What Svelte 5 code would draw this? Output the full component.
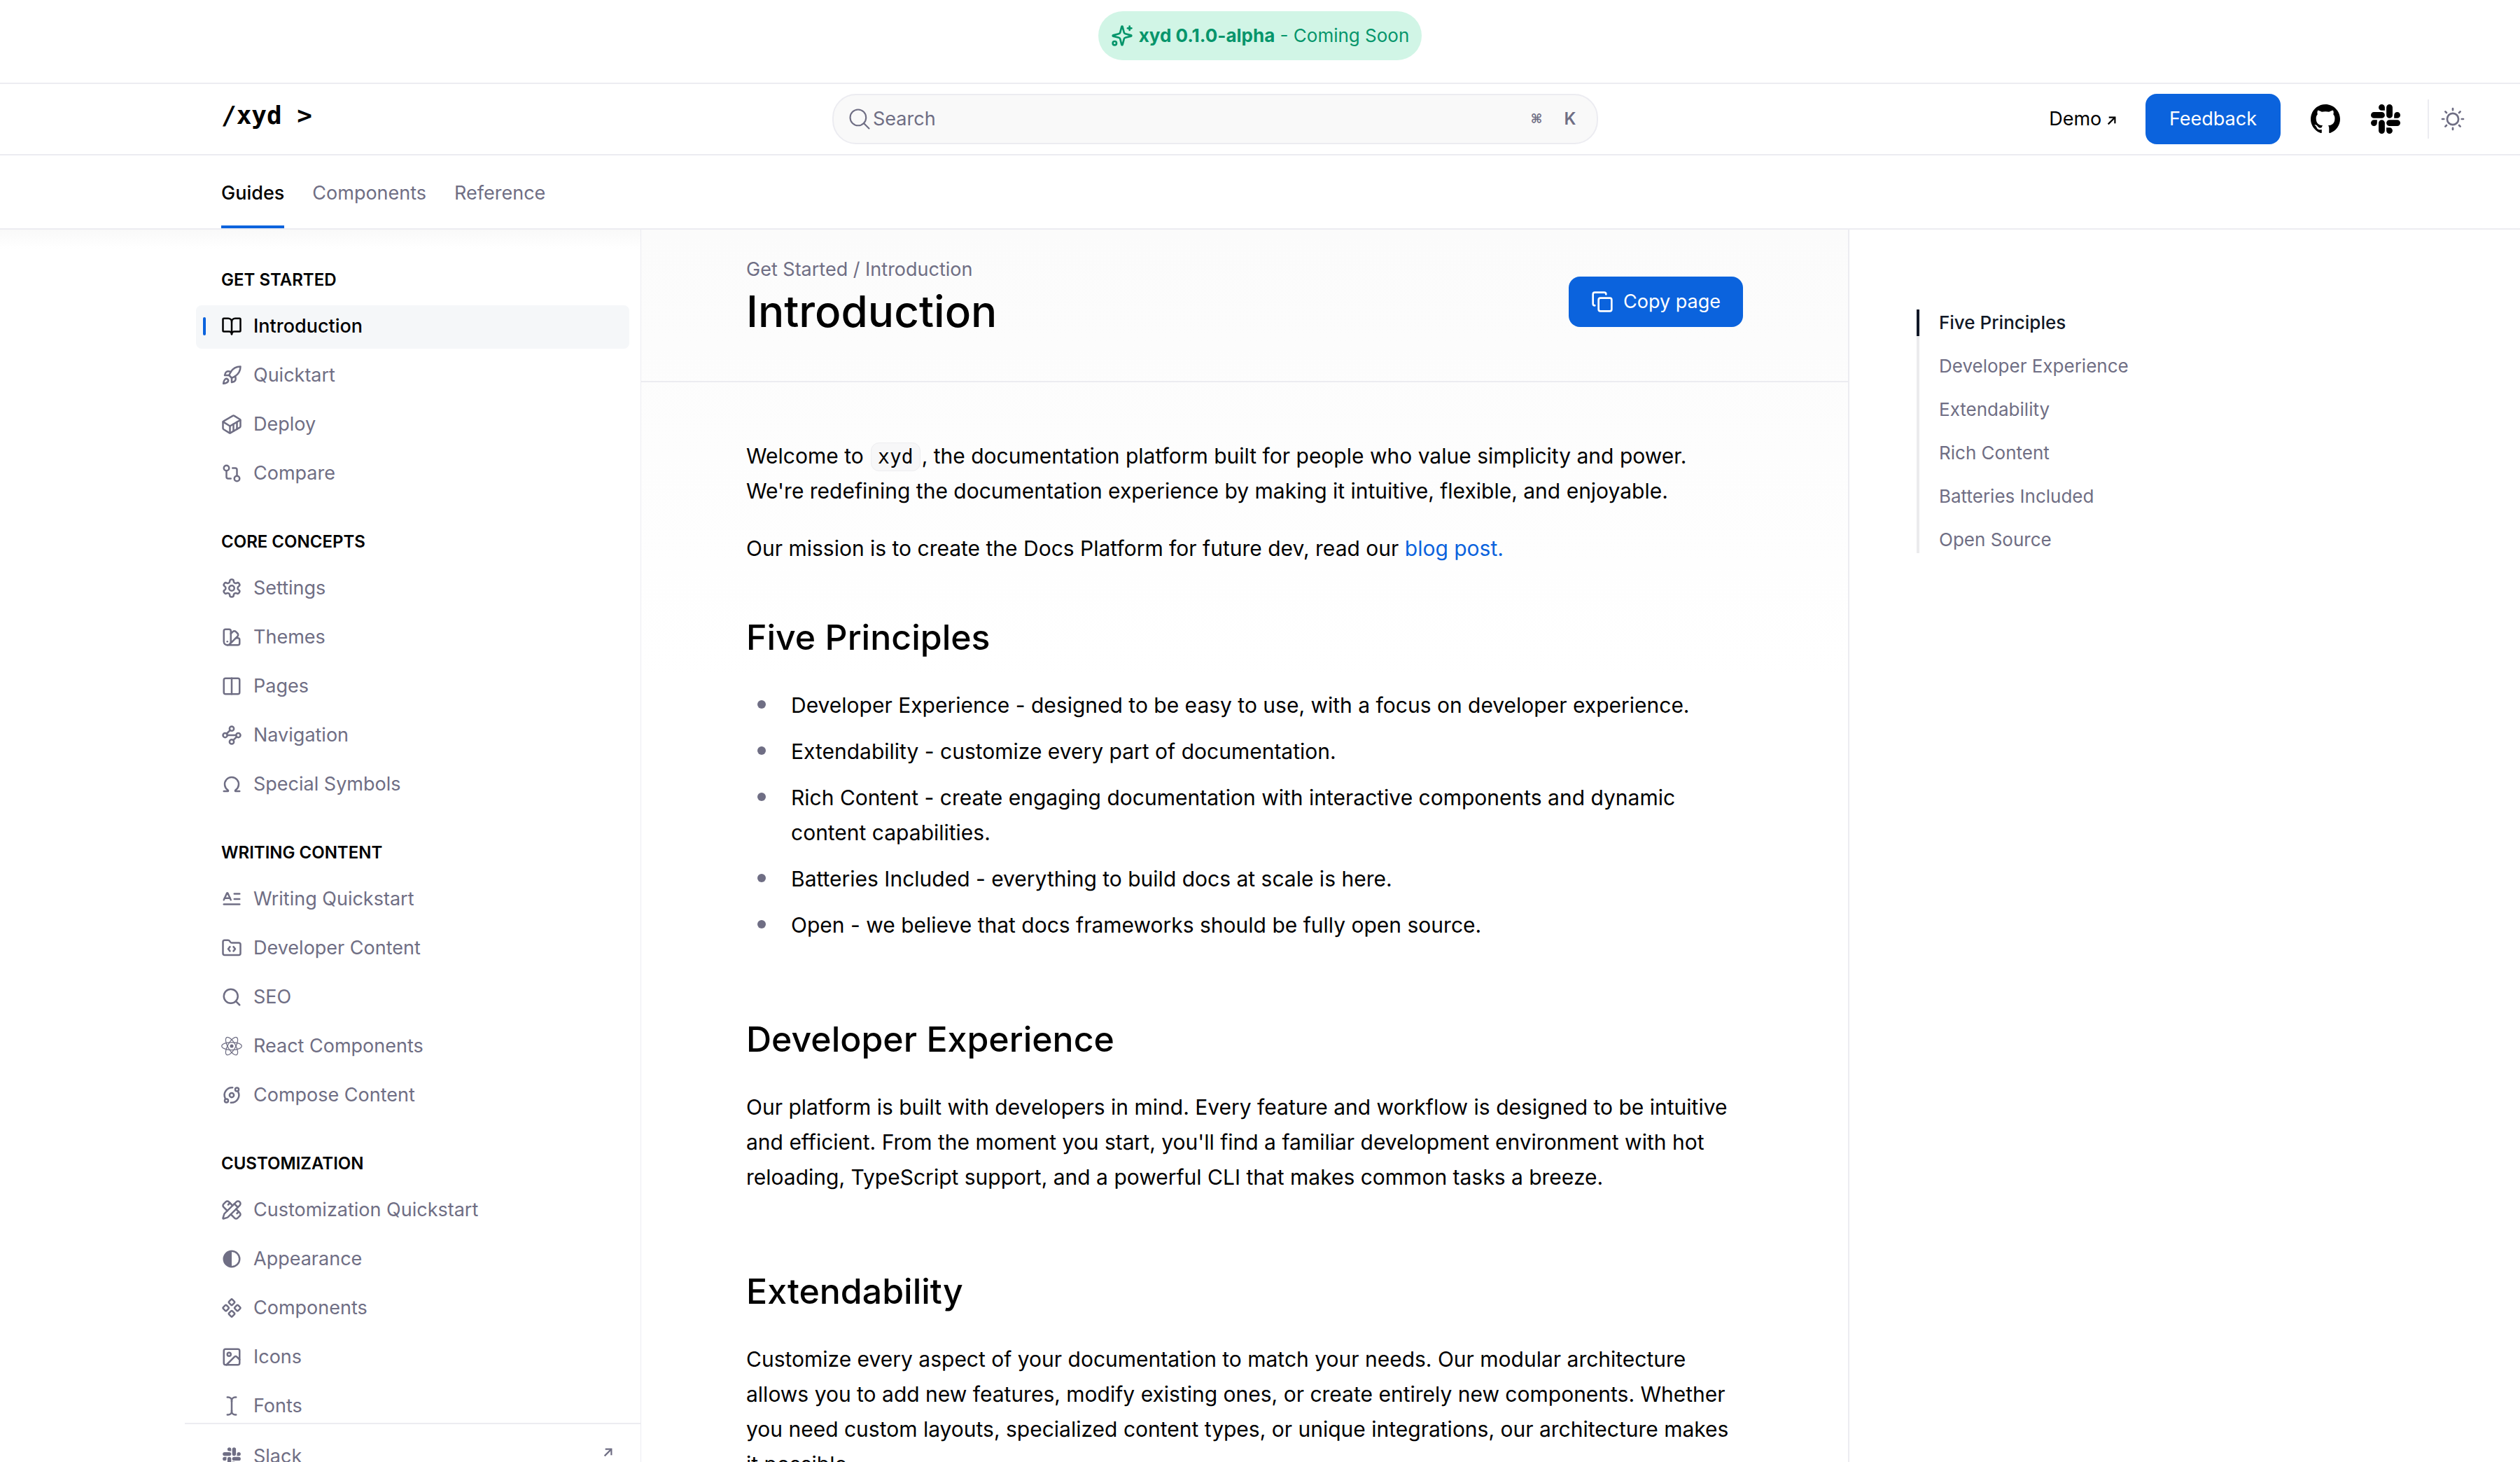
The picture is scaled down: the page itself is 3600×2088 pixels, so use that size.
<script>
  const slackPath =
    'M5.042 15.165a2.528 2.528 0 0 1-2.52 2.523A2.528 2.528 0 0 1 0 15.165a2.527 2.527 0 0 1 2.522-2.52h2.52v2.52zM6.313 15.165a2.527 2.527 0 0 1 2.521-2.52 2.527 2.527 0 0 1 2.521 2.52v6.313A2.528 2.528 0 0 1 8.834 24a2.528 2.528 0 0 1-2.521-2.522v-6.313zM8.834 5.042a2.528 2.528 0 0 1-2.521-2.52A2.528 2.528 0 0 1 8.834 0a2.528 2.528 0 0 1 2.521 2.522v2.52H8.834zM8.834 6.313a2.528 2.528 0 0 1 2.521 2.521 2.528 2.528 0 0 1-2.521 2.521H2.522A2.528 2.528 0 0 1 0 8.834a2.528 2.528 0 0 1 2.522-2.521h6.312zM18.956 8.834a2.528 2.528 0 0 1 2.522-2.521A2.528 2.528 0 0 1 24 8.834a2.528 2.528 0 0 1-2.522 2.521h-2.522V8.834zM17.688 8.834a2.528 2.528 0 0 1-2.523 2.521 2.527 2.527 0 0 1-2.52-2.521V2.522A2.527 2.527 0 0 1 15.165 0a2.528 2.528 0 0 1 2.523 2.522v6.312zM15.165 18.956a2.528 2.528 0 0 1 2.523 2.522A2.528 2.528 0 0 1 15.165 24a2.527 2.527 0 0 1-2.52-2.522v-2.522h2.52zM15.165 17.688a2.527 2.527 0 0 1-2.52-2.523 2.526 2.526 0 0 1 2.52-2.52h6.313A2.527 2.527 0 0 1 24 15.165a2.528 2.528 0 0 1-2.522 2.523h-6.313z';

  // Each icon is a list of stroked paths on a 24 unit grid.
  const dot = (x, y, r) => `M${x - r} ${y}a${r} ${r} 0 1 0 ${2 * r} 0a${r} ${r} 0 1 0 ${-2 * r} 0`;
  const square = 'M5 3h14a2 2 0 0 1 2 2v14a2 2 0 0 1-2 2H5a2 2 0 0 1-2-2V5a2 2 0 0 1 2-2z';

  const icons = {
    book: ['M12 7v14', 'M3 18a1 1 0 0 1-1-1V4a1 1 0 0 1 1-1h5a4 4 0 0 1 4 4 4 4 0 0 1 4-4h5a1 1 0 0 1 1 1v13a1 1 0 0 1-1 1h-6a3 3 0 0 0-3 3 3 3 0 0 0-3-3z'],
    rocket: [
      'M4.5 16.5c-1.5 1.26-2 5-2 5s3.74-.5 5-2c.71-.84.7-2.13-.09-2.91a2.18 2.18 0 0 0-2.91-.09z',
      'm12 15-3-3a22 22 0 0 1 2-3.95A12.88 12.88 0 0 1 22 2c0 2.72-.78 7.5-6 11a22.35 22.35 0 0 1-4 2z',
      'M9 12H4s.55-3.03 2-4c1.62-1.08 5 0 5 0',
      'M12 15v5s3.03-.55 4-2c1.08-1.62 0-5 0-5'
    ],
    container: [
      'M22 7.7c0-.6-.4-1.2-.8-1.5l-6.3-3.9a1.72 1.72 0 0 0-1.7 0l-10.3 6c-.5.2-.9.8-.9 1.4v6.6c0 .5.4 1.2.8 1.5l6.3 3.9a1.72 1.72 0 0 0 1.7 0l10.3-6c.5-.3.9-1 .9-1.5Z',
      'M10 21.9V14L2.1 9.1', 'm10 14 11.9-6.9', 'M14 19.8v-8.1', 'M18 17.5V9.4'
    ],
    compare: [dot(18, 18, 3), dot(6, 6, 3), 'M13 6h3a2 2 0 0 1 2 2v7', 'M11 18H8a2 2 0 0 1-2-2V9'],
    settings: [
      'M12.22 2h-.44a2 2 0 0 0-2 2v.18a2 2 0 0 1-1 1.73l-.43.25a2 2 0 0 1-2 0l-.15-.08a2 2 0 0 0-2.73.73l-.22.38a2 2 0 0 0 .73 2.73l.15.1a2 2 0 0 1 1 1.72v.51a2 2 0 0 1-1 1.74l-.15.09a2 2 0 0 0-.73 2.73l.22.38a2 2 0 0 0 2.73.73l.15-.08a2 2 0 0 1 2 0l.43.25a2 2 0 0 1 1 1.73V20a2 2 0 0 0 2 2h.44a2 2 0 0 0 2-2v-.18a2 2 0 0 1 1-1.73l.43-.25a2 2 0 0 1 2 0l.15.08a2 2 0 0 0 2.73-.73l.22-.39a2 2 0 0 0-.73-2.73l-.15-.08a2 2 0 0 1-1-1.74v-.5a2 2 0 0 1 1-1.74l.15-.09a2 2 0 0 0 .73-2.73l-.22-.38a2 2 0 0 0-2.73-.73l-.15.08a2 2 0 0 1-2 0l-.43-.25a2 2 0 0 1-1-1.73V4a2 2 0 0 0-2-2z',
      dot(12, 12, 3)
    ],
    swatch: [
      'M11 17a4 4 0 0 1-8 0V5a2 2 0 0 1 2-2h4a2 2 0 0 1 2 2Z',
      'M16.7 13H19a2 2 0 0 1 2 2v4a2 2 0 0 1-2 2H7',
      'M7 17h.01',
      'm11 8 2.3-2.3a2.4 2.4 0 0 1 3.404.004L18.6 7.6a2.4 2.4 0 0 1 .026 3.434L9.9 19.8'
    ],
    columns: [square, 'M12 3v18'],
    waypoints: [dot(12, 4.5, 2.5), 'm10.2 6.3-3.9 3.9', dot(4.5, 12, 2.5), 'M7 12h10', dot(19.5, 12, 2.5), 'm13.8 17.7 3.9-3.9', dot(12, 19.5, 2.5)],
    omega: ['M3 20h4.5a.5.5 0 0 0 .5-.5v-.282a.52.52 0 0 0-.247-.437 8 8 0 1 1 8.494-.001.52.52 0 0 0-.247.438v.282a.5.5 0 0 0 .5.5H21'],
    paragraph: ['M15 6h6', 'M15 12h6', 'M3 18h18', 'm3 13 3.553-7.724a.5.5 0 0 1 .894 0L11 13', 'M3.92 11h6.16'],
    folder: [
      'M10 10.5 8 13l2 2.5', 'm14 10.5 2 2.5-2 2.5',
      'M20 20a2 2 0 0 0 2-2V8a2 2 0 0 0-2-2h-7.9a2 2 0 0 1-1.69-.9L9.6 3.9A2 2 0 0 0 7.93 3H4a2 2 0 0 0-2 2v13a2 2 0 0 0 2 2z'
    ],
    search: [dot(11, 11, 8), 'm21 21-4.34-4.34'],
    orbit: [
      'M19.5 8.5A8.6 8.6 0 0 1 11 20.6', 'M4.5 15.5A8.6 8.6 0 0 1 13 3.4',
      dot(12, 12, 2.5), dot(18, 5.6, 2), dot(6, 18.4, 2)
    ],
    ruler: [
      'M13 7 8.7 2.7a2.41 2.41 0 0 0-3.4 0L2.7 5.3a2.41 2.41 0 0 0 0 3.4L7 13', 'm8 6 2-2', 'm18 16 2-2',
      'm17 11 4.3 4.3c.94.94.94 2.46 0 3.4l-2.6 2.6c-.94.94-2.46.94-3.4 0L11 17',
      'M21.174 6.812a1 1 0 0 0-3.986-3.987L3.842 16.174a2 2 0 0 0-.5.83l-1.321 4.352a.5.5 0 0 0 .623.622l4.353-1.32a2 2 0 0 0 .83-.497z',
      'm15 5 4 4'
    ],
    diamonds: [
      'M15.536 11.293a1 1 0 0 0 0 1.414l2.376 2.377a1 1 0 0 0 1.414 0l2.377-2.377a1 1 0 0 0 0-1.414l-2.377-2.377a1 1 0 0 0-1.414 0z',
      'M2.297 11.293a1 1 0 0 0 0 1.414l2.377 2.377a1 1 0 0 0 1.414 0l2.377-2.377a1 1 0 0 0 0-1.414L6.088 8.916a1 1 0 0 0-1.414 0z',
      'M8.916 17.912a1 1 0 0 0 0 1.415l2.377 2.376a1 1 0 0 0 1.414 0l2.377-2.376a1 1 0 0 0 0-1.415l-2.377-2.376a1 1 0 0 0-1.414 0z',
      'M8.916 4.674a1 1 0 0 0 0 1.414l2.377 2.376a1 1 0 0 0 1.414 0l2.377-2.376a1 1 0 0 0 0-1.414l-2.377-2.377a1 1 0 0 0-1.414 0z'
    ],
    image: [square, dot(9, 9, 2), 'm21 15-3.086-3.086a2 2 0 0 0-2.828 0L6 21'],
    cursor: ['M17 22h-1a4 4 0 0 1-4-4V6a4 4 0 0 1 4-4h1', 'M7 22h1a4 4 0 0 0 4-4v-1', 'M7 2h1a4 4 0 0 1 4 4v1'],
    sparkles: [
      'M9.937 15.5A2 2 0 0 0 8.5 14.063l-6.135-1.582a.5.5 0 0 1 0-.962L8.5 9.936A2 2 0 0 0 9.937 8.5l1.582-6.135a.5.5 0 0 1 .963 0L14.063 8.5A2 2 0 0 0 15.5 9.937l6.135 1.581a.5.5 0 0 1 0 .964L15.5 14.063a2 2 0 0 0-1.437 1.437l-1.582 6.135a.5.5 0 0 1-.963 0z',
      'M20 2v4', 'M22 4h-4', dot(4, 20, 2)
    ],
    copy: ['M10 8h10a2 2 0 0 1 2 2v10a2 2 0 0 1-2 2H10a2 2 0 0 1-2-2V10a2 2 0 0 1 2-2z', 'M4 16c-1.1 0-2-.9-2-2V4c0-1.1.9-2 2-2h10c1.1 0 2 .9 2 2'],
    arrow: ['M3 21 21 3', 'M5 3h16v16']
  };

  const groups = [
    { title: 'Get Started', items: [['Introduction', 'book'], ['Quicktart', 'rocket'], ['Deploy', 'container'], ['Compare', 'compare']] },
    { title: 'Core Concepts', items: [['Settings', 'settings'], ['Themes', 'swatch'], ['Pages', 'columns'], ['Navigation', 'waypoints'], ['Special Symbols', 'omega']] },
    { title: 'Writing Content', items: [['Writing Quickstart', 'paragraph'], ['Developer Content', 'folder'], ['SEO', 'search'], ['React Components', 'react'], ['Compose Content', 'orbit']] },
    { title: 'Customization', items: [['Customization Quickstart', 'ruler'], ['Appearance', 'contrast'], ['Components', 'diamonds'], ['Icons', 'image'], ['Fonts', 'cursor']] }
  ];

  const tabs = ['Guides', 'Components', 'Reference'];
  const toc = ['Five Principles', 'Developer Experience', 'Extendability', 'Rich Content', 'Batteries Included', 'Open Source'];
  const principles = [
    'Developer Experience - designed to be easy to use, with a focus on developer experience.',
    'Extendability - customize every part of documentation.',
    'Rich Content - create engaging documentation with interactive components and dynamic content capabilities.',
    'Batteries Included - everything to build docs at scale is here.',
    'Open - we believe that docs frameworks should be fully open source.'
  ];

  let activeTab = $state('Guides');
  let activePage = $state('Introduction');
  let activeHeading = $state('Five Principles');
</script>

{#snippet icon(name)}
  {#if name === 'react'}
    <svg class="icon react" viewBox="0 0 24 24" aria-hidden="true">
      <ellipse cx="12" cy="12" rx="11.4" ry="4.4" />
      <ellipse cx="12" cy="12" rx="11.4" ry="4.4" transform="rotate(60 12 12)" />
      <ellipse cx="12" cy="12" rx="11.4" ry="4.4" transform="rotate(120 12 12)" />
      <circle class="solid" cx="12" cy="12" r="2" />
    </svg>
  {:else if name === 'contrast'}
    <svg class="icon" viewBox="0 0 24 24" aria-hidden="true">
      <circle cx="12" cy="12" r="9" />
      <path class="solid" d="M12 3a9 9 0 0 0 0 18z" />
    </svg>
  {:else if name === 'slack'}
    <svg class="icon" viewBox="-2 -2 28 28" aria-hidden="true"><path class="solid" d={slackPath} /></svg>
  {:else}
    <svg class="icon {name}-icon" viewBox="0 0 24 24" aria-hidden="true">
      {#each icons[name] as d}<path {d} />{/each}
    </svg>
  {/if}
{/snippet}

<div class="page">
  <div class="banner">
    <p class="pill">
      {@render icon('sparkles')}
      <span><strong>xyd 0.1.0-alpha</strong> - Coming Soon</span>
    </p>
  </div>

  <header class="topbar">
    <a class="logo" href="#home">/xyd &gt;</a>
    <label class="search">
      <svg class="icon" viewBox="0 0 24 24" aria-hidden="true"><circle cx="10.5" cy="10.5" r="8" /><path d="m21.5 21.5-5.3-5.3" /></svg>
      <input type="search" placeholder="Search" aria-label="Search" />
      <span class="keys"><kbd class="cmd">⌘</kbd><kbd>K</kbd></span>
    </label>
    <div class="actions">
      <a class="demo" href="#demo">Demo {@render icon('arrow')}</a>
      <button class="primary" type="button">Feedback</button>
      <a class="brand" href="#github" aria-label="GitHub">
        <svg viewBox="0 0 16 16" aria-hidden="true"><path d="M8 0C3.58 0 0 3.58 0 8c0 3.54 2.29 6.53 5.47 7.59.4.07.55-.17.55-.38 0-.19-.01-.82-.01-1.49-2.01.37-2.53-.49-2.69-.94-.09-.23-.48-.94-.82-1.13-.28-.15-.68-.52-.01-.53.63-.01 1.08.58 1.23.82.72 1.21 1.87.87 2.33.66.07-.52.28-.87.51-1.07-1.78-.2-3.64-.89-3.64-3.95 0-.87.31-1.59.82-2.15-.08-.2-.36-1.02.08-2.12 0 0 .67-.21 2.2.82.64-.18 1.32-.27 2-.27s1.36.09 2 .27c1.53-1.04 2.2-.82 2.2-.82.44 1.1.16 1.92.08 2.12.51.56.82 1.27.82 2.15 0 3.07-1.87 3.75-3.65 3.95.29.25.54.73.54 1.48 0 1.07-.01 1.93-.01 2.2 0 .21.15.46.55.38A8.01 8.01 0 0 0 16 8c0-4.42-3.58-8-8-8z" /></svg>
      </a>
      <a class="brand" href="#slack" aria-label="Slack"><svg viewBox="0 0 24 24" aria-hidden="true"><path d={slackPath} /></svg></a>
      <div class="theme">
        <button type="button" aria-label="Toggle theme">
          <svg class="icon" viewBox="0 0 24 24" aria-hidden="true">
            <circle cx="12" cy="12" r="5.4" />
            <path d="M12 2v1.5M12 20.5V22M2 12h1.5M20.5 12H22M4.9 4.9 6 6M18 18l1.1 1.1M4.9 19.1 6 18M18 6l1.1-1.1" />
          </svg>
        </button>
      </div>
    </div>
  </header>

  <nav class="tabs" aria-label="Sections">
    {#each tabs as tab}
      <a href="#{tab}" class:active={tab === activeTab} onclick={() => (activeTab = tab)}>{tab}</a>
    {/each}
  </nav>

  <div class="body">
    <aside class="sidebar">
      <nav class="groups" aria-label="Pages">
        {#each groups as group}
          <section>
            <h4>{group.title}</h4>
            <ul>
              {#each group.items as [label, name]}
                <li>
                  <a href="#{label}" class:active={label === activePage} onclick={() => (activePage = label)}>
                    {@render icon(name)}{label}
                  </a>
                </li>
              {/each}
            </ul>
          </section>
        {/each}
      </nav>
      <div class="sidefoot">
        <a href="#community">{@render icon('slack')}Slack<span class="out">{@render icon('arrow')}</span></a>
      </div>
    </aside>

    <main>
      <div class="pagehead">
        <div>
          <p class="crumbs">Get Started / Introduction</p>
          <h1>Introduction</h1>
        </div>
        <button class="primary copy" type="button">{@render icon('copy')}Copy page</button>
      </div>
      <article>
        <section class="intro">
          <p>
            Welcome to <code>xyd</code>, the documentation platform built for people who value simplicity and power. We're
            redefining the documentation experience by making it intuitive, flexible, and enjoyable.
          </p>
          <p>Our mission is to create the Docs Platform for future dev, read our <a href="#blog">blog post.</a></p>
        </section>
        <section>
          <h2>Five Principles</h2>
          <ul>
            {#each principles as text}<li><span>{text}</span></li>{/each}
          </ul>
        </section>
        <section>
          <h2>Developer Experience</h2>
          <p>
            Our platform is built with developers in mind. Every feature and workflow is designed to be intuitive and
            efficient. From the moment you start, you'll find a familiar development environment with hot reloading,
            TypeScript support, and a powerful CLI that makes common tasks a breeze.
          </p>
        </section>
        <section>
          <h2>Extendability</h2>
          <p>
            Customize every aspect of your documentation to match your needs. Our modular architecture allows you to add new
            features, modify existing ones, or create entirely new components. Whether you need custom layouts, specialized
            content types, or unique integrations, our architecture makes it possible.
          </p>
        </section>
      </article>
    </main>

    <aside class="toc">
      <nav aria-label="On this page">
        {#each toc as item}
          <a href="#{item}" class:active={item === activeHeading} onclick={() => (activeHeading = item)}>{item}</a>
        {/each}
      </nav>
    </aside>
  </div>
</div>

<style>
  :global(body) {
    margin: 0;
    background: #fff;
  }
  .page {
    --muted: #6f6e84;
    --line: #ececf1;
    --blue: #0b63dd;
    display: flex;
    flex-direction: column;
    height: 100vh;
    overflow: hidden;
    background: #fff;
    color: #000;
    font-family: Inter, 'Open Sans', sans-serif;
    font-size: 27px;
    line-height: 38px;
  }
  h1, h2, h4, p, ul {
    margin: 0;
    padding: 0;
  }
  ul {
    list-style: none;
  }
  a {
    color: inherit;
    text-decoration: none;
  }
  button {
    border: 0;
    padding: 0;
    background: none;
    color: inherit;
    font: inherit;
    cursor: pointer;
  }
  .icon {
    flex: none;
    width: 30px;
    height: 30px;
    fill: none;
    stroke: currentColor;
    stroke-width: 2;
    stroke-linecap: round;
    stroke-linejoin: round;
  }
  .icon .solid {
    fill: currentColor;
    stroke: none;
  }
  .react {
    stroke-width: 1;
  }
  .arrow-icon {
    width: 13px;
    height: 13px;
    stroke-width: 4;
    stroke-linecap: butt;
    stroke-linejoin: miter;
  }

  .banner {
    display: flex;
    justify-content: center;
    padding: 16px 0 32px;
    border-bottom: 2px solid var(--line);
  }
  .pill {
    display: flex;
    align-items: center;
    gap: 8px;
    padding: 16px 18px;
    border-radius: 35px;
    background: #d1f5e6;
    color: #06956b;
    font-size: 26px;
  }
  .pill .icon {
    width: 32px;
    height: 32px;
  }
  .pill strong {
    font-weight: 700;
  }

  .topbar {
    display: grid;
    grid-template-columns: 873px minmax(0, 1094px) 1fr;
    align-items: center;
    padding: 14px 78px 14px 316px;
    border-bottom: 2px solid var(--line);
  }
  .logo {
    padding-bottom: 10px;
    font-family: 'DejaVu Sans Mono', 'Liberation Mono', monospace;
    font-size: 36px;
    font-weight: 700;
  }
  .search {
    display: flex;
    align-items: center;
    gap: 2px;
    box-sizing: border-box;
    height: 72px;
    padding: 0 18px 0 20px;
    border: 2px solid var(--line);
    border-radius: 34px;
    background: #f9f9f9;
    color: var(--muted);
  }
  .search .icon {
    width: 34px;
    height: 34px;
    stroke-width: 1.5;
  }
  .search input {
    flex: 1;
    min-width: 0;
    padding: 0;
    border: 0;
    outline: 0;
    background: none;
    color: inherit;
    font: inherit;
  }
  .search input::placeholder {
    color: inherit;
    opacity: 1;
  }
  .keys {
    display: flex;
    gap: 8px;
  }
  .keys kbd {
    width: 40px;
    text-align: center;
    font-family: inherit;
    font-size: 24px;
    font-weight: 600;
  }
  .keys .cmd {
    font-family: 'DejaVu Sans Mono', monospace;
  }
  .actions {
    display: flex;
    align-items: center;
    justify-content: flex-end;
    gap: 42px;
  }
  .demo {
    white-space: nowrap;
  }
  .primary {
    display: flex;
    align-items: center;
    gap: 14px;
    height: 72px;
    padding: 0 34px;
    border-radius: 16px;
    background: var(--blue);
    color: #fff;
    white-space: nowrap;
  }
  .primary.copy {
    padding: 0 32px;
  }
  .primary .icon {
    width: 32px;
    height: 32px;
  }
  .brand {
    display: flex;
    justify-content: center;
    width: 44px;
  }
  .brand svg {
    width: 42px;
    height: 42px;
  }
  .theme {
    display: flex;
    align-items: center;
    height: 56px;
    margin-left: -4px;
    padding-left: 16px;
    border-left: 2px solid var(--line);
    color: var(--muted);
  }
  .theme button {
    display: flex;
  }
  .theme .icon {
    width: 36px;
    height: 36px;
    stroke-width: 1.8;
  }

  .tabs {
    display: flex;
    gap: 40px;
    padding-left: 316px;
    border-bottom: 2px solid var(--line);
    color: var(--muted);
  }
  .tabs a {
    padding: 35px 0 27px;
    border-bottom: 4px solid transparent;
  }
  .tabs .active {
    border-color: var(--blue);
    color: #000;
    font-weight: 500;
  }

  .body {
    display: grid;
    grid-template-columns: 916px minmax(0, 1fr) 960px;
    flex: 1;
    min-height: 0;
  }
  .sidebar {
    display: flex;
    flex-direction: column;
    min-height: 0;
    border-right: 1px solid var(--line);
    background: linear-gradient(#f9f9f9, #fff 28px);
  }
  .groups {
    flex: 1;
    min-height: 0;
    overflow: hidden;
    padding: 56px 16px 0 280px;
  }
  .groups section {
    margin-bottom: 50px;
  }
  h4 {
    margin-bottom: 20px;
    padding-left: 36px;
    font-size: 24px;
    font-weight: 600;
    line-height: 32px;
    text-transform: uppercase;
  }
  .groups ul {
    display: flex;
    flex-direction: column;
    gap: 8px;
  }
  .groups a,
  .sidefoot a {
    display: flex;
    align-items: center;
    gap: 16px;
    padding: 11px 24px 13px 36px;
    border-radius: 8px;
    color: var(--muted);
  }
  .groups .active {
    padding-left: 10px;
    background: #f5f7f9;
    color: #000;
    font-weight: 500;
  }
  .groups .active::before {
    content: '';
    width: 4px;
    height: 26px;
    margin-right: 6px;
    border-radius: 2px;
    background: var(--blue);
  }
  .sidefoot {
    flex: none;
    height: 54px;
    overflow: hidden;
    margin-left: 264px;
    padding: 0 16px;
    border-top: 2px solid var(--line);
  }
  .sidefoot a {
    margin-top: 16px;
  }
  .out {
    display: flex;
    margin-left: auto;
    padding-bottom: 12px;
  }

  main {
    overflow: hidden;
    background: linear-gradient(#fbfbfb, #fff 640px);
  }
  .pagehead {
    display: flex;
    align-items: center;
    justify-content: space-between;
    padding: 43px 150px 53px;
    border-bottom: 2px solid var(--line);
  }
  .crumbs {
    color: var(--muted);
    line-height: 28px;
  }
  h1 {
    font-size: 62px;
    font-weight: 500;
    line-height: 92px;
  }
  article {
    padding: 80px 150px 0;
    font-size: 30px;
    line-height: 50px;
  }
  article section {
    margin-bottom: 106px;
  }
  article .intro {
    display: flex;
    flex-direction: column;
    gap: 32px;
    margin-bottom: 70px;
  }
  article a {
    color: var(--blue);
  }
  code {
    margin: 0 2px;
    padding: 3px 9px;
    border: 1px solid #eeeef0;
    border-radius: 12px;
    background: #f7f7f8;
    font-family: 'DejaVu Sans Mono', 'Liberation Mono', monospace;
    font-size: 28px;
    line-height: 32px;
  }
  h2 {
    margin-bottom: 40px;
    font-size: 50px;
    font-weight: 500;
    line-height: 64px;
  }
  article ul {
    display: flex;
    flex-direction: column;
    gap: 16px;
  }
  article li {
    display: flex;
  }
  article li::before {
    content: '';
    flex: none;
    width: 12px;
    height: 12px;
    margin: 18px 36px 0 16px;
    border-radius: 6px;
    background: var(--muted);
  }

  .toc {
    padding: 114px 96px 0;
    border-left: 2px solid var(--line);
    font-size: 26px;
  }
  .toc nav {
    display: flex;
    flex-direction: column;
    gap: 24px;
    border-left: 4px solid #ebebed;
    color: var(--muted);
  }
  .toc a {
    margin-left: -4px;
    padding-left: 28px;
    border-left: 4px solid transparent;
  }
  .toc .active {
    border-color: #111827;
    color: #111827;
    font-weight: 500;
  }
</style>
